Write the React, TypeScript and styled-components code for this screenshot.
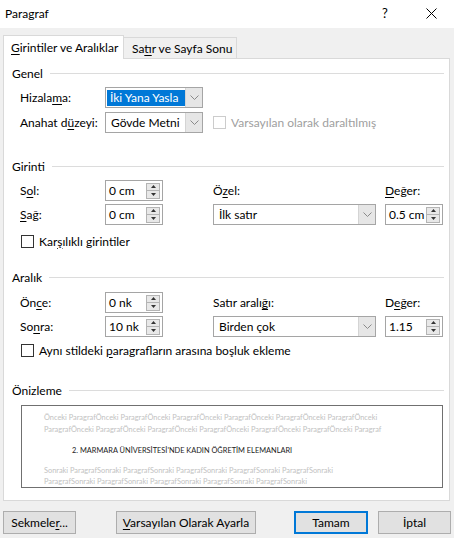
import React from "react";
import styled, { createGlobalStyle } from "styled-components";

const Global = createGlobalStyle`
  html, body { margin: 0; padding: 0; background: #f0f0f0; }
  body { font-family: Lato, "Noto Sans", sans-serif; font-size: 12px; color: #000; }
  * { box-sizing: border-box; }
`;

const Dialog = styled.div`
  width: 454px;
  height: 538px;
  background: #f0f0f0;
  display: flex;
  flex-direction: column;
  overflow: hidden;
`;

const TitleBar = styled.div`
  height: 28px;
  background: #fff;
  display: flex;
  align-items: center;
  padding: 0 0 2px 5px;
`;

const Title = styled.div`
  flex: 1;
  font-size: 12px;
`;

const TitleButton = styled.div<{ $w: number }>`
  width: ${(p) => p.$w}px;
  height: 26px;
  display: flex;
  align-items: center;
  justify-content: center;
  font-size: 13px;
`;

const TabStrip = styled.div`
  margin-top: 7px;
  height: 23px;
  display: flex;
  align-items: flex-end;
  padding-left: 3px;
`;

const Tab = styled.div<{ $active?: boolean; $w: number }>`
  position: relative;
  z-index: ${(p) => (p.$active ? 2 : 1)};
  width: ${(p) => p.$w}px;
  height: ${(p) => (p.$active ? 24 : 21)}px;
  margin-bottom: ${(p) => (p.$active ? -1 : 0)}px;
  margin-left: ${(p) => (p.$active ? 0 : -1)}px;
  padding: 0 0 ${(p) => (p.$active ? 1 : 0)}px ${(p) => (p.$active ? 7 : 8)}px;
  border: 1px solid #d9d9d9;
  border-bottom: none;
  background: ${(p) => (p.$active ? "#fff" : "#f0f0f0")};
  display: flex;
  align-items: center;
  white-space: nowrap;
`;

const Panel = styled.div`
  margin: 0 4px 0 3px;
  height: 443px;
  background: #fff;
  border: 1px solid #d9d9d9;
  padding: 6px 5px 0 8px;
  display: flex;
  flex-direction: column;
`;

const SectionHead = styled.div<{ $mt: number }>`
  margin-top: ${(p) => p.$mt}px;
  display: flex;
  align-items: center;
  height: 16px;
  &::after {
    content: "";
    flex: 1;
    height: 1px;
    background: #dcdcdc;
    margin-left: 7px;
  }
`;

const FieldGrid = styled.div<{ $cols: string; $mt: number; $rowGap: number }>`
  margin-top: ${(p) => p.$mt}px;
  margin-left: 8px;
  display: grid;
  grid-template-columns: ${(p) => p.$cols};
  grid-auto-rows: 21px;
  row-gap: ${(p) => p.$rowGap}px;
  align-items: center;
`;

const Label = styled.div`
  white-space: nowrap;
`;

const U = styled.span`
  text-decoration: underline;
  text-underline-offset: 2px;
`;

const Combo = styled.div<{ $w: number }>`
  width: ${(p) => p.$w}px;
  height: 21px;
  border: 1px solid #a5a5a5;
  background: #fff;
  display: flex;
  align-items: stretch;
`;

const ComboText = styled.div`
  flex: 1;
  display: flex;
  align-items: center;
  padding-left: 5px;
  white-space: nowrap;
`;

const Highlight = styled.span`
  background: #0078d7;
  color: #fff;
  height: 16px;
  line-height: 16px;
  width: 78px;
  padding-left: 3px;
  display: inline-block;
  margin-left: -4px;
`;

const ComboButton = styled.div`
  width: 17px;
  background: #e6e6e6;
  border-left: 1px solid #d4d4d4;
  display: flex;
  align-items: center;
  justify-content: center;
`;

const SpinBox = styled.div`
  width: 58px;
  height: 21px;
  border: 1px solid #a5a5a5;
  background: #fff;
  display: flex;
  align-items: center;
  padding: 1px 2px 1px 3px;
`;

const SpinText = styled.div`
  flex: 1;
  white-space: nowrap;
`;

const SpinButtons = styled.div`
  width: 14px;
  height: 16px;
  display: flex;
  flex-direction: column;
`;

const SpinHalf = styled.div`
  flex: 1;
  border: 1px solid #b4b4b4;
  background: #e8e8e8;
  display: flex;
  align-items: center;
  justify-content: center;
  & + & {
    border-top: none;
  }
`;

const CheckRow = styled.div<{ $mt: number }>`
  margin-top: ${(p) => p.$mt}px;
  margin-left: 9px;
  height: 16px;
  display: flex;
  align-items: center;
  gap: 5px;
  white-space: nowrap;
`;

const Box = styled.div<{ $disabled?: boolean }>`
  width: 13px;
  height: 13px;
  border: 1px solid ${(p) => (p.$disabled ? "#cccccc" : "#333333")};
  background: #fff;
  flex: none;
`;

const DisabledCheck = styled.div`
  display: flex;
  align-items: center;
  gap: 5px;
  color: #a0a0a0;
  white-space: nowrap;
`;

const Preview = styled.div`
  margin: 7px 1px 0 9px;
  height: 83px;
  border: 1px solid #707070;
  padding: 6px 0 0 22px;
  overflow: hidden;
`;

const PreviewLine = styled.div<{ $dark?: boolean; $indent?: number; $mt?: number }>`
  font-size: 7.4px;
  line-height: 11.5px;
  white-space: nowrap;
  color: ${(p) => (p.$dark ? "#222" : "#c2c2c2")};
  margin-left: ${(p) => p.$indent ?? 0}px;
  margin-top: ${(p) => p.$mt ?? 0}px;
`;

const Footer = styled.div`
  margin-top: 10px;
  padding: 0 3px 0 3px;
  display: flex;
  justify-content: space-between;
`;

const ButtonGroup = styled.div<{ $gap: number }>`
  display: flex;
  gap: ${(p) => p.$gap}px;
`;

const Button = styled.button<{ $w: number; $primary?: boolean }>`
  width: ${(p) => p.$w}px;
  height: 23px;
  font-family: inherit;
  font-size: 12px;
  color: #000;
  background: #e1e1e1;
  border: ${(p) => (p.$primary ? "2px solid #0078d7" : "1px solid #adadad")};
  padding: 0;
  display: flex;
  align-items: center;
  justify-content: center;
`;

const Chevron = () => (
  <svg width="9" height="5" viewBox="0 0 9 5">
    <path d="M0.5 0.5 L4.5 4.5 L8.5 0.5" fill="none" stroke="#8a8a8a" strokeWidth="1" />
  </svg>
);

const Up = () => (
  <svg width="5" height="3" viewBox="0 0 5 3">
    <path d="M0 3 L2.5 0 L5 3 Z" fill="#333" />
  </svg>
);

const Down = () => (
  <svg width="5" height="3" viewBox="0 0 5 3">
    <path d="M0 0 L2.5 3 L5 0 Z" fill="#333" />
  </svg>
);

const Spinner = ({ value }: { value: string }) => (
  <SpinBox>
    <SpinText>{value}</SpinText>
    <SpinButtons>
      <SpinHalf>
        <Up />
      </SpinHalf>
      <SpinHalf>
        <Down />
      </SpinHalf>
    </SpinButtons>
  </SpinBox>
);

const Dropdown = ({ w, children }: { w: number; children: React.ReactNode }) => (
  <Combo $w={w}>
    <ComboText>{children}</ComboText>
    <ComboButton>
      <Chevron />
    </ComboButton>
  </Combo>
);

const before1 =
  "Önceki ParagrafÖnceki ParagrafÖnceki ParagrafÖnceki ParagrafÖnceki ParagrafÖnceki ParagrafÖnceki";
const before2 =
  "ParagrafÖnceki ParagrafÖnceki ParagrafÖnceki ParagrafÖnceki ParagrafÖnceki ParagrafÖnceki Paragraf";
const after1 =
  "Sonraki ParagrafSonraki ParagrafSonraki ParagrafSonraki ParagrafSonraki ParagrafSonraki";
const after2 = "ParagrafSonraki ParagrafSonraki ParagrafSonraki ParagrafSonraki ParagrafSonraki";

const COLS = "85px 108px 172px 58px";

export default function App() {
  return (
    <>
      <Global />
      <Dialog>
        <TitleBar>
          <Title>Paragraf</Title>
          <TitleButton $w={46}>?</TitleButton>
          <TitleButton $w={46}>
            <svg width="11" height="11" viewBox="0 0 11 11">
              <path d="M0.5 0.5 L10.5 10.5 M10.5 0.5 L0.5 10.5" stroke="#000" strokeWidth="1" />
            </svg>
          </TitleButton>
        </TitleBar>

        <TabStrip>
          <Tab $active $w={121}>
            <span>
              <U>G</U>irintiler ve Aralıklar
            </span>
          </Tab>
          <Tab $w={114}>
            <span>
              Sa<U>t</U>ır ve Sayfa Sonu
            </span>
          </Tab>
        </TabStrip>

        <Panel>
          <SectionHead $mt={0}>Genel</SectionHead>
          <FieldGrid $cols="85px 108px auto" $mt={6} $rowGap={4}>
            <Label>
              Hizala<U>m</U>a:
            </Label>
            <Dropdown w={98}>
              <Highlight>İki Yana Yasla</Highlight>
            </Dropdown>
            <span />
            <Label>
              Anahat d<U>ü</U>zeyi:
            </Label>
            <Dropdown w={98}>Gövde Metni</Dropdown>
            <DisabledCheck>
              <Box $disabled />
              Varsayılan olarak daraltılmış
            </DisabledCheck>
          </FieldGrid>

          <SectionHead $mt={25}>Girinti</SectionHead>
          <FieldGrid $cols={COLS} $mt={6} $rowGap={3}>
            <Label>
              S<U>o</U>l:
            </Label>
            <Spinner value="0 cm" />
            <Label>
              Ö<U>z</U>el:
            </Label>
            <Label>
              <U>D</U>eğer:
            </Label>
            <Label>
              <U>S</U>ağ:
            </Label>
            <Spinner value="0 cm" />
            <Dropdown w={163}>İlk satır</Dropdown>
            <Spinner value="0.5 cm" />
          </FieldGrid>
          <CheckRow $mt={8}>
            <Box />
            <span>
              Kar<U>ş</U>ılıklı girintiler
            </span>
          </CheckRow>

          <SectionHead $mt={20}>Aralık</SectionHead>
          <FieldGrid $cols={COLS} $mt={7} $rowGap={3}>
            <Label>
              Ön<U>c</U>e:
            </Label>
            <Spinner value="0 nk" />
            <Label>
              Satır aralı<U>ğ</U>ı:
            </Label>
            <Label>
              D<U>e</U>ğer:
            </Label>
            <Label>
              So<U>n</U>ra:
            </Label>
            <Spinner value="10 nk" />
            <Dropdown w={163}>Birden çok</Dropdown>
            <Spinner value="1.15" />
          </FieldGrid>
          <CheckRow $mt={5}>
            <Box />
            <span>
              Aynı stildeki <U>p</U>aragrafların arasına boşluk ekleme
            </span>
          </CheckRow>

          <SectionHead $mt={24}>Önizleme</SectionHead>
          <Preview>
            <PreviewLine>{before1}</PreviewLine>
            <PreviewLine>{before2}</PreviewLine>
            <PreviewLine $dark $indent={28} $mt={10}>
              2. MARMARA ÜNİVERSİTESİ'NDE KADIN ÖĞRETİM ELEMANLARI
            </PreviewLine>
            <PreviewLine $mt={8}>{after1}</PreviewLine>
            <PreviewLine>{after2}</PreviewLine>
          </Preview>
        </Panel>

        <Footer>
          <ButtonGroup $gap={40}>
            <Button $w={73}>
              <span>
                Sekmele<U>r</U>...
              </span>
            </Button>
            <Button $w={140}>
              <span>
                <U>V</U>arsayılan Olarak Ayarla
              </span>
            </Button>
          </ButtonGroup>
          <ButtonGroup $gap={10}>
            <Button $w={74} $primary>
              Tamam
            </Button>
            <Button $w={73}>İptal</Button>
          </ButtonGroup>
        </Footer>
      </Dialog>
    </>
  );
}
